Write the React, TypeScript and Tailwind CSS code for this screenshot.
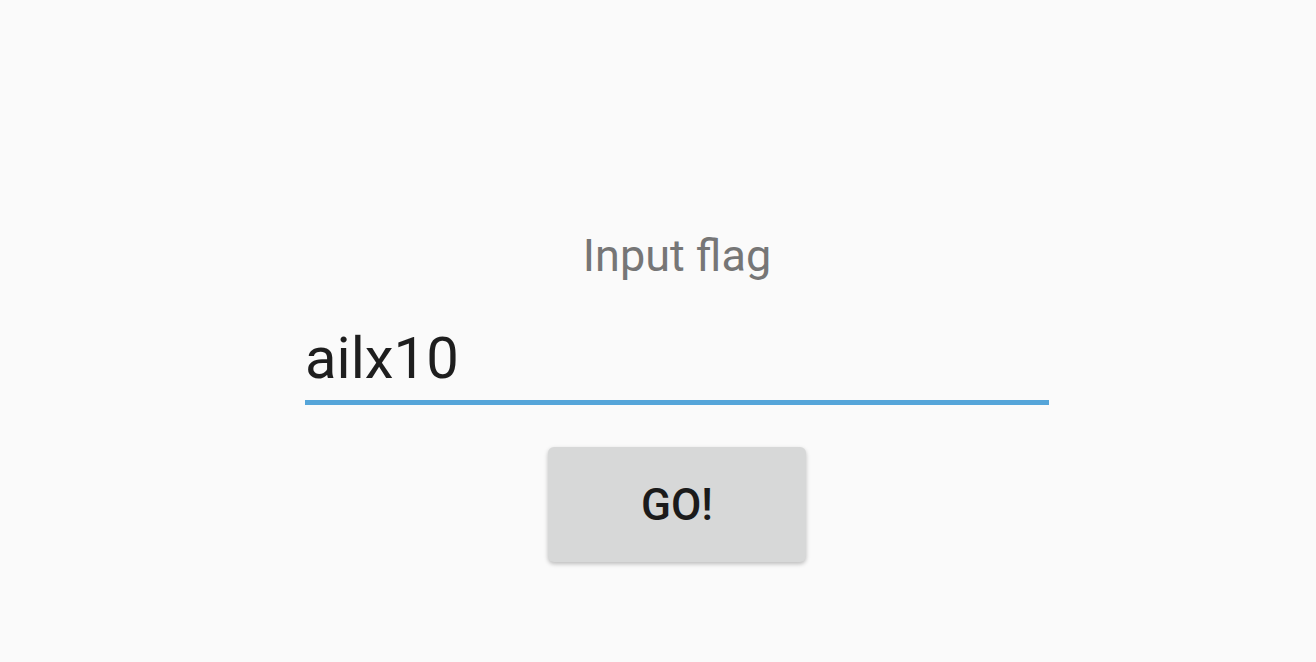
export default function App() {
  return (
    <div
      className="w-[1316px] h-[662px] bg-[#fafafa] overflow-hidden"
      style={{ fontFamily: 'Roboto, "Noto Sans", sans-serif' }}
    >
      <div className="ml-[305px] w-[744px] pt-[230px] flex flex-col items-center">
        {/* Label */}
        <div className="text-[45px] leading-[52px] text-[#767676]">Input flag</div>

        {/* Input */}
        <div className="mt-[43px] w-full">
          <div className="text-[58px] leading-[66px] text-[#1e1e1e]">ailx10</div>
          <div className="mt-[9px] h-[5px] w-full bg-[#55a5d9]" />
        </div>

        {/* Button */}
        <button className="mt-[42px] w-[258px] h-[115px] rounded-[6px] bg-[#d7d8d8] shadow-[0_2px_4px_rgba(0,0,0,0.25)] flex items-center justify-center">
          <span className="text-[44px] font-medium text-[#1b1b1b] leading-none">GO!</span>
        </button>
      </div>
    </div>
  )
}
